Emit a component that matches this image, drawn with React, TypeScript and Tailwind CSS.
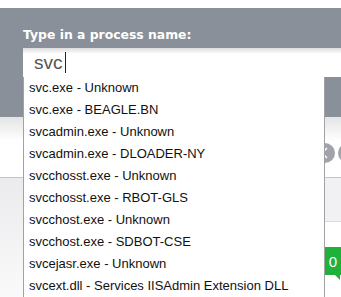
import React from "react";

const items = [
  "svc.exe - Unknown",
  "svc.exe - BEAGLE.BN",
  "svcadmin.exe - Unknown",
  "svcadmin.exe - DLOADER-NY",
  "svcchosst.exe - Unknown",
  "svcchosst.exe - RBOT-GLS",
  "svcchost.exe - Unknown",
  "svcchost.exe - SDBOT-CSE",
  "svcejasr.exe - Unknown",
  "svcext.dll - Services IISAdmin Extension DLL",
];

export default function App() {
  return (
    <div className="relative w-[341px] h-[297px] overflow-hidden bg-white">
      <div className="h-[8px] bg-white" />
      <div className="h-[109px] bg-[#8a9099] pl-[23px] pt-[19px] flex flex-col">
        <div
          className="text-white font-bold text-[12.4px] leading-[16px] h-[21px]"
          style={{ fontFamily: '"DejaVu Sans", sans-serif' }}
        >
          Type in a process name:
        </div>
        <div className="h-[29px] bg-gradient-to-b from-[#dcdcdc] via-white via-[20%] to-white flex items-center pl-[11px]">
          <span
            className="text-[19px] text-[#555] leading-none"
            style={{ fontFamily: '"Liberation Sans", Arial, sans-serif' }}
          >
            svc
          </span>
          <span className="ml-[2px] w-[1px] h-[21px] bg-[#222]" />
        </div>
      </div>
      <div className="h-[61px] bg-gradient-to-b from-[#e4e4e6] via-white via-[40%] to-white border-b border-[#c4c4c4] flex items-center">
        <div className="ml-[315px] flex gap-[3px] mt-[11px]">
          <div className="w-[20px] h-[20px] rounded-full bg-[#a0a3aa] flex items-center justify-center shrink-0">
            <svg width="10" height="12" viewBox="0 0 10 12">
              <path d="M7 1 L2 6 L7 11" stroke="white" strokeWidth="1.6" fill="none" />
            </svg>
          </div>
          <div className="w-[20px] h-[20px] rounded-full bg-[#a0a3aa] shrink-0" />
        </div>
      </div>
      <div className="grid grid-cols-[23px_1fr] h-[119px]">
        <div className="bg-gradient-to-b from-[#ebebee] to-[#fafafa]" />
        <div className="flex flex-col">
          <div className="h-[44px] bg-[#f1f1f3] border-b border-[#dcdcdc]" />
          <div className="flex-1 bg-white pt-[25px] flex justify-end">
            <div className="relative w-[16px] h-[28px] bg-[#1fb13a] flex items-center justify-center">
              <span
                className="text-white text-[15px] leading-none font-light"
                style={{ fontFamily: '"Liberation Sans", Arial, sans-serif' }}
              >
                0
              </span>
              <div className="absolute right-[1px] bottom-[-5px] w-0 h-0 border-t-[5px] border-t-[#1fb13a] border-l-[5px] border-l-transparent" />
            </div>
          </div>
        </div>
      </div>

      <div className="absolute left-[23px] top-[77px] w-[302px] bg-white border-l border-r border-[#a2a2a2]">
        {items.map((t) => (
          <div
            key={t}
            className="h-[22px] pl-[5px] flex items-center text-[13px] text-[#111] whitespace-nowrap"
            style={{ fontFamily: '"Liberation Sans", Arial, sans-serif' }}
          >
            {t}
          </div>
        ))}
      </div>
    </div>
  );
}
